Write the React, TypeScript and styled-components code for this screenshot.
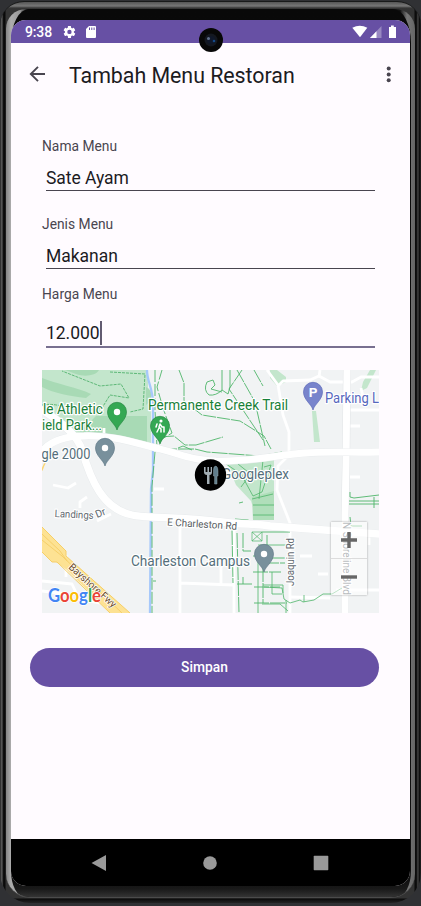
import React from "react";
import styled, { createGlobalStyle } from "styled-components";

const GlobalStyle = createGlobalStyle`
  * { box-sizing: border-box; }
  body { margin: 0; background: #303134; font-family: Roboto, sans-serif; }
`;

const Stage = styled.main`
  width: 421px;
  height: 906px;
  padding-top: 1px;
  overflow: hidden;
  background: #303134;
`;

const Shell = styled.div`
  width: 421px;
  height: 902px;
  padding: 7px 6px 5px;
  border-radius: 24px 24px 30px 30px;
  border-top: 1px solid #191a1a;
  background:
    linear-gradient(#565656, #777 4px, #363636 6px, transparent 7px),
    linear-gradient(transparent 896px, #0b0b0b 897px, #2a2a2a 902px),
    linear-gradient(90deg, #222 0, #666 2px, #111 3px, #080808 5px, #333 6px, #333 414px, #090909 415px, #151515 417px, #555 418px, #090909 419px, #222 421px);
`;

const Rim = styled.div`
  height: 889px;
  padding: 0 4px 0 5px;
  border-radius: 20px 20px 24px 24px;
  border-bottom: 1px solid #4b4b4b;
  background: linear-gradient(90deg, #858585, #adadad 5px, #999 14px, #111 22px, #111 394px, #777 401px, #646464);
  overflow: hidden;
`;

const Glass = styled.div`
  height: 888px;
  padding-top: 11px;
  border-radius: 18px 18px 14px 14px / 34px 34px 26px 26px;
  background: linear-gradient(#090909 0, #101010 870px, #191919 880px, #343434 888px);
`;

const Screen = styled.div`
  width: 399px;
  height: 866px;
  display: flex;
  flex-direction: column;
  border-radius: 15px;
  overflow: hidden;
  background: #fffbff;
`;

const StatusBar = styled.header`
  position: relative;
  height: 23px;
  flex: none;
  background: #6750a4;
  color: #fff;
`;

const StatusRow = styled.div`
  height: 23px;
  padding: 1px 12px 0 14px;
  display: flex;
  align-items: center;
  font-size: 14px;
  font-weight: 500;
  letter-spacing: -0.15px;
`;

const StatusIcons = styled.svg<{ $push?: boolean; $w: number }>`
  display: block;
  width: ${(p) => p.$w}px;
  height: 16px;
  margin-left: ${(p) => (p.$push ? "auto" : "10px")};
`;

const Camera = styled.svg`
  position: absolute;
  z-index: 1;
  left: 188px;
  top: 8px;
  width: 24px;
  height: 24px;
`;

const TopBar = styled.div`
  height: 64px;
  flex: none;
  display: flex;
  align-items: center;
  padding: 0 13px 0 15px;
`;

const BarIcon = styled.svg<{ $w: number }>`
  width: ${(p) => p.$w}px;
  height: 24px;
  display: block;
  flex: none;
`;

const Title = styled.h1`
  flex: 1;
  margin: 0 0 0 19px;
  padding-top: 2px;
  font-size: 21.4px;
  line-height: 28px;
  font-weight: 400;
  letter-spacing: -0.04px;
  color: #1c1b1f;
  white-space: nowrap;
`;

const Form = styled.section`
  padding: 30px 31px 0;
  display: flex;
  flex-direction: column;
`;

const Field = styled.div<{ $h: number }>`
  height: ${(p) => p.$h}px;
`;

const Label = styled.div`
  height: 18px;
  font-size: 13.8px;
  line-height: 18px;
  letter-spacing: 0.02px;
  color: #49454f;
`;

const Entry = styled.div<{ $focused?: boolean }>`
  height: ${(p) => (p.$focused ? 45 : 36)}px;
  margin: 0 4px;
  padding-bottom: ${(p) => (p.$focused ? 1 : 0)}px;
  display: flex;
  align-items: flex-end;
  border-bottom: ${(p) => (p.$focused ? "2px solid #786f90" : "1px solid #49454f")};
  font-size: 17.5px;
  line-height: 23px;
  letter-spacing: -0.04px;
  color: #1c1b1f;
`;

const Caret = styled.span`
  width: 2px;
  height: 24px;
  background: #625b71;
`;

const MapBox = styled.div`
  width: 337px;
  height: 243px;
  position: relative;
  overflow: hidden;
  background: #f1f3f4;
`;

const MapDrawing = styled.svg`
  display: block;
  width: 337px;
  height: 243px;
  font-family: Roboto, sans-serif;
`;

const ZoomControl = styled.div`
  position: absolute;
  right: 12px;
  bottom: 18px;
  width: 36px;
  height: 73px;
  display: flex;
  flex-direction: column;
  background: rgba(255, 255, 255, 0.55);
  box-shadow: 0 0 2px rgba(0, 0, 0, 0.35);
`;

const ZoomButton = styled.button`
  flex: 1;
  padding: 0;
  border: 0;
  background: none;
  display: grid;
  place-items: center;
  & + & { border-top: 1px solid #dcdcdc; }
`;

const SaveButton = styled.button`
  width: 349px;
  height: 39px;
  margin: 34.5px 0 0 19px;
  flex: none;
  border: 0;
  border-radius: 20px;
  background: #6750a4;
  color: #fff;
  font: 500 13.8px/39px Roboto, sans-serif;
  padding: 0;
`;

const NavBar = styled.nav`
  height: 47px;
  margin-top: auto;
  flex: none;
  display: flex;
  justify-content: space-between;
  align-items: center;
  padding: 0 80px 0 79px;
  background: #000;
`;

const NavIcon = styled.svg`
  width: 18px;
  height: 18px;
  fill: #999;
`;

type PinProps = { x: number; y: number; color: string; edge: string; children?: React.ReactNode };

const Pin = ({ x, y, color, edge, children }: PinProps) => (
  <g transform={`translate(${x} ${y})`}>
    <path d="M0 18C-1.5 12-9.5 8-9.5-.2A9.5 9.5 0 0 1 9.5-.2C9.5 8 1.5 12 0 18Z" fill={color} stroke={edge} strokeWidth=".7" />
    {children ?? <circle r="3.2" fill="#fff" />}
  </g>
);

const halo = { stroke: "#fff", strokeWidth: 2.4, strokeLinejoin: "round" as const, paintOrder: "stroke" };

const MapView = () => (
  <MapDrawing viewBox="42 370 337 243">
    <rect x="42" y="370" width="337" height="243" fill="#f1f3f4" />

    {/* parks */}
    <path d="M42 370H148V445L105 434L72 433L42 409Z" fill="#c3e6cc" />
    <path d="M42 378C56 384 77 387 91 394L86 398C69 396 53 393 42 387ZM65 370H99C96 376 84 377 76 374ZM96 416H148V444L106 434L80 432Z" fill="#a8dab5" />
    <path d="M146 387Q153 389 151 401L146 405Z" fill="#a8dab5" />
    <path d="M147 405L151 402V446L147 444Z" fill="#c3e6cc" />
    <path d="M227 463L265 459H274V520H257L251 501L236 485Z" fill="#c3e6cc" />
    <path d="M252 497L274 491V520H253Z" fill="#b0deba" />
    <path d="M270 370H277L286 377V382L277 386L270 378ZM312 411H316L320 442H314ZM370 370H376L367 388L361 391L363 382Z" fill="#c3e6cc" />
    <g fill="none" stroke="#44ac62" strokeWidth=".8" strokeDasharray="3 1">
      <path d="M42 405Q55 403 67 408L82 411L102 408L110 395L129 398L121 384L100 386L62 371" />
      <path d="M110 372L145 374L143 409L130 412" />
    </g>

    {/* minor roads */}
    <g fill="none" stroke="#fff" strokeWidth="2.8" strokeLinejoin="round">
      <path d="M104 428V436M53 485L68 488L76 483M80 508V502L87 497M97 521L111 514" />
      <path d="M267 370L278 385L283 415L289 432V455L278 466L277 490L290 523V613M278 386L283 381L310 380L319 376L330 382L352 382L361 377H379" />
      <path d="M320 370L319 377M361 388L363 397M349 410H379M350 426H360M350 477H360" />
      <path d="M180 527V613M180 583L234 585M234 525V613M221 567V585" />
      <path d="M42 581L72 584L79 599L100 603M66 555V577M42 591L67 594M300 556H312M318 574H328M289 597L330 598M336 590H379" />
      <path d="M154 489H164M340 535H379M369 530V545" />
    </g>
    <path d="M347 370L346 466L345 515V613" stroke="#e2e5e7" strokeWidth="8" fill="none" />
    <path d="M347 370L346 466L345 515V613" stroke="#fff" strokeWidth="7" fill="none" />

    {/* creek */}
    <path d="M147 370C147 382 153 388 153 404L153 436V470L151 489L150 613" fill="none" stroke="#a6c8fb" strokeWidth="2.3" />

    {/* trails */}
    <g fill="none" stroke="#4fb56a" strokeWidth=".9">
      <path d="M155 370V392L155 410L157 447M155 452L152 486L152 613" strokeDasharray="12 2" />
      <path d="M162 370L157 387L163 408L172 433L162 439L156 452" strokeDasharray="10 2" />
      <path d="M179 370L184 383V401L202 415L240 421L264 436L271 449" strokeDasharray="13 1" />
      <path d="M222 370V390L228 394L230 387V370M222 390Q216 396 209 395Q203 390 207 382L213 380L215 385L211 389L222 392" />
      <path d="M242 370L229 389L263 440M237 370L255 402L265 446M254 370L263 386" strokeDasharray="14 1" />
      <path d="M158 437L174 436L185 445H196L223 437M161 449H195L207 452L260 456L282 452" strokeDasharray="16 1" />
      <path d="M178 448L183 446L192 450" />
      <path d="M226 464L241 474L253 496L262 492L271 465L264 467M247 479L241 487M238 464L253 476H271M263 460L259 499M252 499L273 494M253 505H274M253 515H274" strokeWidth=".8" />
      <path d="M239 503L243 502M235 519L248 520L258 525" />
      <path d="M252 532H262V541H252ZM252 532L262 541M262 532L252 541" strokeWidth=".7" />
      <path d="M232 530L233 583M237 533L239 613M243 533V551H251M243 577V584M237 584H253M253 556H265M253 572H281M263 567V603M254 587H280M254 603H287M272 558H285M264 563H285M153 581H156" strokeDasharray="15 1" />
      <path d="M258 545H290M258 552V613M264 587L282 588L284 599L290 603L300 600L303 602L314 600L323 594H332L342 588M263 585H283V593M272 572V594H282M262 604H280L288 611M286 600V613M304 595V602M267 524L283 526" strokeWidth=".8" />
      <path d="M350 492V497L354 498L379 495M349 501H379M349 504H379M350 517L351 526H362M374 497V508M262 532H290M267 535V548" />
    </g>

    {/* arterial roads */}
    <g fill="none" strokeLinecap="round" strokeLinejoin="round">
      <path d="M42 410C60 421 77 435 82 450C91 481 103 509 132 515C150 519 182 516 222 522C245 525 254 523 270 526L379 534" stroke="#e8ebed" strokeWidth="8.2" />
      <path d="M42 451C51 441 65 436 84 436C113 435 135 443 160 449C184 455 187 459 216 461C253 462 276 455 305 453C330 451 352 453 379 452" stroke="#e8ebed" strokeWidth="7.6" />
      <path d="M42 410C60 421 77 435 82 450C91 481 103 509 132 515C150 519 182 516 222 522C245 525 254 523 270 526L379 534" stroke="#fff" strokeWidth="7.4" />
      <path d="M42 451C51 441 65 436 84 436C113 435 135 443 160 449C184 455 187 459 216 461C253 462 276 455 305 453C330 451 352 453 379 452" stroke="#fff" strokeWidth="6.8" />
      <path d="M42 470Q45 461 52 452" stroke="#fbd675" strokeWidth="1.5" />
    </g>

    {/* freeway */}
    <path d="M42 527L66 551V556L130 613H110L67 570L56 562H52L42 552Z" fill="#fde293" />
    <path d="M42 527L66 551V556L130 613M42 552L52 562H57L110 613M42 540L62 556L122 613M42 534L60 551L67 561" fill="none" stroke="#f6cf69" strokeWidth="1" />

    <Pin x={117} y={412} color="#34a853" edge="#278842" />
    <Pin x={105} y={448} color="#78909c" edge="#607986" />
    <Pin x={160} y={426} color="#34a853" edge="#278842">
      <g fill="none" stroke="#fff" strokeWidth="1.5" strokeLinecap="round" strokeLinejoin="round">
        <circle cx="1" cy="-5" r=".8" fill="#fff" />
        <path d="M0-2L-1 1L1 3V6M-1 2L-3 6M0-2L2 1H4M-3-2L-4 1M4 1V6" />
      </g>
    </Pin>
    <Pin x={313} y={392} color="#7884cc" edge="#5c69b7">
      <text x="0" y="4.5" textAnchor="middle" fontSize="13.5" fontWeight="700" fill="#fff">P</text>
    </Pin>
    <Pin x={264} y={554} color="#78909c" edge="#607986" />

    <g fontSize="13.8" fill="#188038" {...halo}>
      <text x="43" y="414" textLength="60" lengthAdjust="spacingAndGlyphs">le Athletic</text>
      <text x="42" y="430" textLength="60" lengthAdjust="spacingAndGlyphs">ield Park...</text>
      <text x="148" y="410" textLength="140" lengthAdjust="spacingAndGlyphs">Permanente Creek Trail</text>
    </g>
    <g fontSize="13.8" fill="#546e7a" {...halo}>
      <text x="41.5" y="459" textLength="49" lengthAdjust="spacingAndGlyphs">gle 2000</text>
      <text x="222" y="479" textLength="67" lengthAdjust="spacingAndGlyphs">Googleplex</text>
      <text x="131" y="565.5" textLength="119" lengthAdjust="spacingAndGlyphs">Charleston Campus</text>
    </g>
    <text x="325" y="403" fontSize="13.8" fill="#5667bd" textLength="54" lengthAdjust="spacingAndGlyphs" {...halo}>Parking L</text>
    <g fontSize="10.3" fill="#626970" {...halo}>
      <text transform="translate(54.5 517) rotate(3)" textLength="39" lengthAdjust="spacingAndGlyphs">Landings</text>
      <text transform="translate(97 518) rotate(-22)">Dr</text>
      <text transform="translate(167 525.5) rotate(3.5)" textLength="70" lengthAdjust="spacingAndGlyphs" fill="#565c61">E Charleston Rd</text>
      <text transform="translate(294 586) rotate(-90)" textLength="48" lengthAdjust="spacingAndGlyphs">Joaquin Rd</text>
      <text transform="translate(343 522) rotate(90)" textLength="73" lengthAdjust="spacingAndGlyphs">N Shoreline Blvd</text>
      <text transform="translate(68 568) rotate(42)" textLength="60" lengthAdjust="spacingAndGlyphs" fill="#6d4c28" strokeWidth="1.5">Bayshore Fwy</text>
    </g>
    <text x="48" y="602" fontSize="19" fontWeight="700" fontFamily="Lato, sans-serif" textLength="53" lengthAdjust="spacingAndGlyphs" {...halo} strokeWidth="1.5">
      <tspan fill="#4285f4">G</tspan><tspan fill="#ea4335">o</tspan><tspan fill="#fbbc04">o</tspan><tspan fill="#4285f4">g</tspan><tspan fill="#34a853">l</tspan><tspan fill="#ea4335">e</tspan>
    </text>

    <circle cx="210.5" cy="475" r="15.7" fill="#000" />
    <path d="M204 467V472Q204 475 207 475V484H209.5V475Q212 475 212 472V467H210.7V472H209V467H207.4V472H205.6V467Z" fill="#a2adb4" />
    <path d="M213.5 470Q213.5 466 216 466Q218 467 218 471V476H217V484H214.6V476H213.5Z" fill="#607d8b" stroke="#90a4ae" strokeWidth=".5" />
  </MapDrawing>
);

export default function App() {
  return (
    <>
      <GlobalStyle />
      <Stage>
        <Shell>
          <Rim>
            <Glass>
              <Screen>
                <StatusBar>
                  <StatusRow>
                    <span>9:38</span>
                    <StatusIcons $w={36} viewBox="0 0 36 16" fill="#fff">
                      <g transform="translate(0 .5) scale(.62)">
                        <path d="M19.1 12.9a7 7 0 0 0 0-1.8l2-1.6a.5.5 0 0 0 .1-.6l-1.9-3.3a.5.5 0 0 0-.6-.2l-2.4 1a7 7 0 0 0-1.6-1L14.4 2.8a.5.5 0 0 0-.5-.4h-3.8a.5.5 0 0 0-.5.4l-.3 2.6a7 7 0 0 0-1.6 1l-2.4-1a.5.5 0 0 0-.6.2L2.8 8.9a.5.5 0 0 0 .1.6l2 1.6a7 7 0 0 0 0 1.8l-2 1.6a.5.5 0 0 0-.1.6l1.9 3.3c.1.2.4.3.6.2l2.4-1a7 7 0 0 0 1.6 1l.4 2.6c0 .2.2.4.5.4H14a.5.5 0 0 0 .5-.4l.3-2.6a7 7 0 0 0 1.6-1l2.4 1c.2.1.5 0 .6-.2l1.9-3.3a.5.5 0 0 0-.1-.6ZM12 15.5a3.5 3.5 0 1 1 0-7 3.5 3.5 0 0 1 0 7Z" />
                      </g>
                      <path fillRule="evenodd" d="M27 2H33Q34 2 34 3V13Q34 14 33 14H25Q24 14 24 13V5ZM27 3.5V6H28V3.5ZM29.3 3.5V6H30.3V3.5ZM31.6 3.5V6H32.6V3.5Z" />
                    </StatusIcons>
                    <StatusIcons $w={46} $push viewBox="0 0 46 16" fill="#fff">
                      <path d="M.3 3.8Q7.8 -.2 15.3 3.8L8 13.2Z" />
                      <path d="M29.5 2V14H18Z" opacity=".32" />
                      <path d="M24.5 7.2V14H18Z" />
                      <path d="M37 3H39V1.5H41.8V3H44V14H37Z" />
                    </StatusIcons>
                  </StatusRow>
                  <Camera viewBox="0 0 24 24">
                    <circle cx="12" cy="12" r="12" fill="#080808" />
                    <circle cx="12" cy="12" r="6.5" fill="#141820" />
                    <circle cx="12" cy="12" r="4" fill="#10182a" />
                    <circle cx="9.5" cy="10.5" r="1.5" fill="#61708a" />
                    <circle cx="15" cy="13" r="1.3" fill="#164a88" />
                  </Camera>
                </StatusBar>
                <TopBar>
                  <BarIcon $w={24} viewBox="0 0 24 24" fill="none" stroke="#49454f" strokeWidth="1.9">
                    <path d="M19 11H5.5M12 3.8L4.8 11L12 18.2" />
                  </BarIcon>
                  <Title>Tambah Menu Restoran</Title>
                  <BarIcon $w={16} viewBox="0 0 16 24" fill="#49454f">
                    <circle cx="7.7" cy="5.5" r="2" /><circle cx="7.7" cy="11.5" r="2" /><circle cx="7.7" cy="17.2" r="2" />
                  </BarIcon>
                </TopBar>
                <Form>
                  <Field $h={78}><Label>Nama Menu</Label><Entry>Sate Ayam</Entry></Field>
                  <Field $h={70}><Label>Jenis Menu</Label><Entry>Makanan</Entry></Field>
                  <Field $h={85}><Label>Harga Menu</Label><Entry $focused>12.000<Caret /></Entry></Field>
                  <MapBox>
                    <MapView />
                    <ZoomControl>
                      <ZoomButton aria-label="Perbesar">
                        <svg width="16" height="16" viewBox="0 0 16 16" stroke="#666" strokeWidth="3.4"><path d="M0 8H16M8 0V16" /></svg>
                      </ZoomButton>
                      <ZoomButton aria-label="Perkecil">
                        <svg width="16" height="16" viewBox="0 0 16 16" stroke="#666" strokeWidth="3.4"><path d="M0 8H16" /></svg>
                      </ZoomButton>
                    </ZoomControl>
                  </MapBox>
                </Form>
                <SaveButton>Simpan</SaveButton>
                <NavBar>
                  <NavIcon viewBox="0 0 18 18"><path d="M1.5 9L16 1V17Z" /></NavIcon>
                  <NavIcon viewBox="0 0 18 18"><circle cx="9" cy="9" r="6.8" /></NavIcon>
                  <NavIcon viewBox="0 0 18 18"><rect x="1.7" y="1.7" width="14.6" height="14.6" rx=".7" /></NavIcon>
                </NavBar>
              </Screen>
            </Glass>
          </Rim>
        </Shell>
      </Stage>
    </>
  );
}
